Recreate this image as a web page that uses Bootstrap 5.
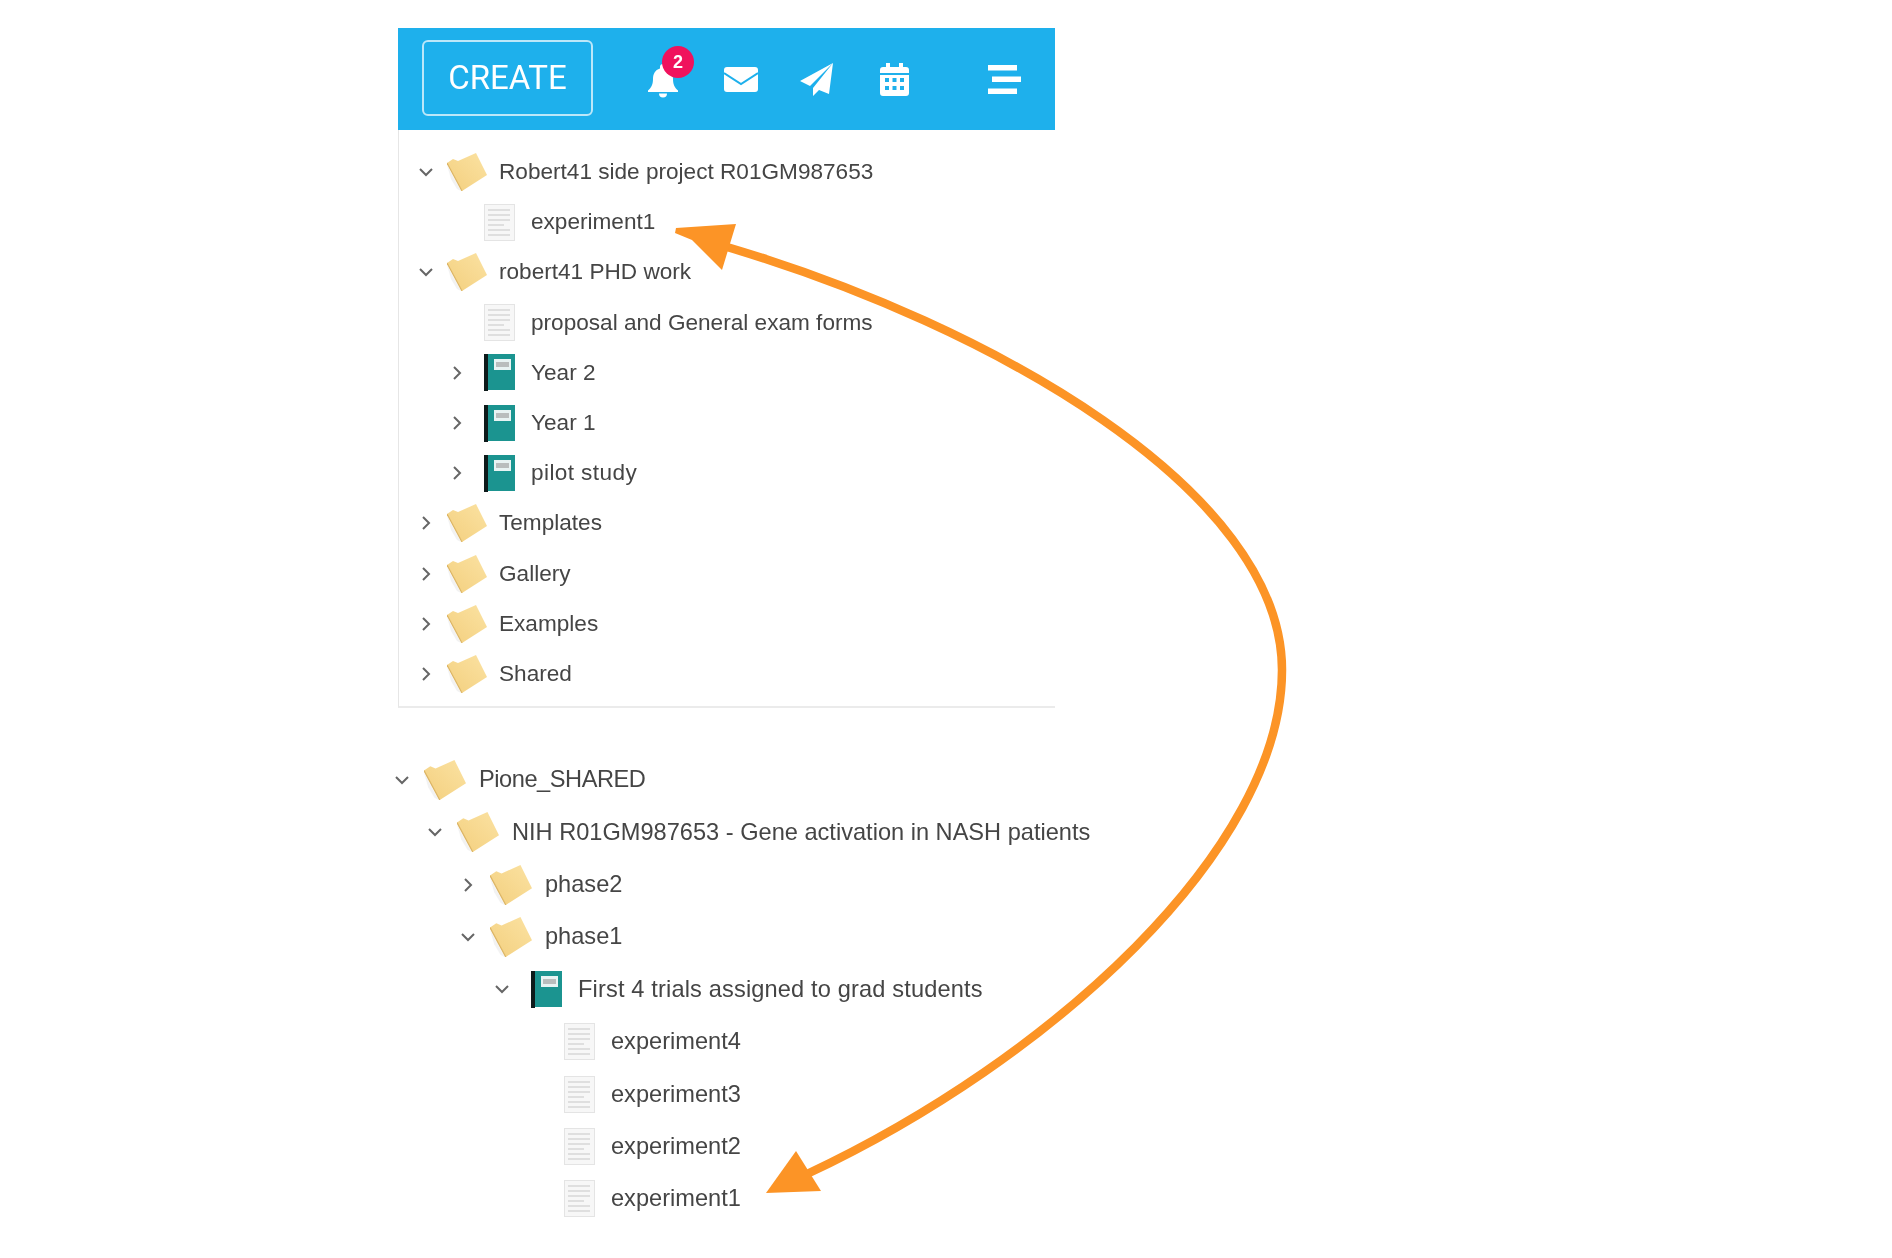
<!DOCTYPE html>
<html lang="en">
<head>
  <meta charset="UTF-8" />
  <meta name="viewport" content="width=device-width, initial-scale=1" />
  <title>Tree move</title>
  <link href="https://cdn.jsdelivr.net/npm/bootstrap@5.3.2/dist/css/bootstrap.min.css" rel="stylesheet">
  <style>
    body { background: #fff; }
    .page-wrap { width: 1892px; height: 1258px; padding: 28px 0 0 398px; overflow: hidden; }
    .side-panel { width: 657px; }
    .top-bar { height: 102px; background: #1eb0ec; padding-left: 24px; gap: 44px; }
    .top-bar > * { filter: blur(.45px); }
    .btn-create {
      width: 171px; height: 76px; padding: 0 0 2px; margin: -2px 11px 0 0;
      font: 400 33px Roboto, sans-serif;
      color: #fff; border: 2px solid rgba(255,255,255,.7); border-radius: 6px;
    }
    .bar-ico { display: block; fill: #fff; }
    .bell-wrap { width: 30px; height: 34px; margin-top: 3px; }
    .bell-badge {
      top: -18px; left: 14px; width: 32px; height: 32px; padding: 0;
      background: #f0125d; color: #fff; font: 700 18px/32px "Liberation Sans", sans-serif;
    }
    .mail-ico { margin: 0 -1.5px 0 1.5px; }
    .cal-ico { margin-left: 2.5px; }
    .menu-push { margin-left: 35px; }
    .tree-box { border-left: 1px solid #e6e6e6; border-bottom: 2px solid #ebebeb; padding: 17px 0 7px 17px; }
    .tree-list { filter: blur(.7px); }
    .tree-row {
      display: flex; align-items: center; height: 50.2px;
      font: 400 22.6px "Liberation Sans", Arial, sans-serif; color: #454545;
    }
    .shared-list { margin: 45.5px 0 0 -6px; width: 760px; }
    .shared-list .tree-row { height: 52.4px; font-size: 23.6px; }
    .chev { width: 20px; height: 20px; flex: none; fill: none; stroke: #666; stroke-width: 2; }
    .no-chev { width: 20px; height: 20px; flex: none; }
    .ico-folder { width: 40px; height: 38px; flex: none; margin: 0 12px 0 11px; }
    .ico-item { width: 31px; height: 37px; flex: none; margin: 0 16px 0 17px; }
    .shared-list .ico-folder { width: 42px; height: 40px; margin: 0 13px 0 12px; }
    .shared-list .ico-item { margin: 0 16px 0 19px; }
    .lv1 { padding-left: 31px; }
    .lv2-s { padding-left: 33px; }
    .lv3-s { padding-left: 66px; }
    .lv4-s { padding-left: 100px; }
    .lv5-s { padding-left: 133px; }
    .track-tight { letter-spacing: -.45px; }
    .track-loose { letter-spacing: .15px; }
    .track-wide { letter-spacing: .4px; }
    .arrow-layer { width: 1892px; height: 1258px; pointer-events: none; }
  </style>
</head>
<body class="position-relative">

  <svg width="0" height="0" class="position-absolute">
    <defs>
      <linearGradient id="fg" x1="0" y1="1" x2="1" y2="0">
        <stop offset="0" stop-color="#f3cf7e"/><stop offset="1" stop-color="#fbe2a2"/>
      </linearGradient>
      <symbol id="folder" viewBox="0 0 40 38">
        <path d="M0 12l14 26-4-2-6-10z" fill="#e6e6e6" opacity=".5"/>
        <path d="M0 10l6-4 5 2 18-8 11 22-25 16z" fill="url(#fg)"/>
        <path d="M0 10l15 28" stroke="#dcb565" stroke-width="1.2"/>
      </symbol>
      <symbol id="doc" viewBox="0 0 31 37">
        <rect x=".5" y=".5" width="30" height="36" fill="#f7f7f7" stroke="#e4e4e4"/>
        <path d="M4 6h22M4 11h22M4 16h22M4 21h16M4 26h22M4 31h22" stroke="#d8d8d8" stroke-width="1.4"/>
      </symbol>
      <symbol id="book" viewBox="0 0 31 37">
        <rect width="31" height="36" fill="#1b9490"/>
        <rect width="4" height="37" fill="#0d1a1a"/>
        <rect x="10" y="5" width="17" height="11" fill="#e8f3f3"/>
        <rect x="12" y="8" width="13" height="5" fill="#b9bdbd"/>
      </symbol>
      <symbol id="down" viewBox="0 0 20 20"><path d="M4 7l6 6 6-6"/></symbol>
      <symbol id="right" viewBox="0 0 20 20"><path d="M7 4l6 6-6 6"/></symbol>
    </defs>
  </svg>

  <div class="page-wrap">
    <div class="side-panel">
      <div class="top-bar d-flex align-items-center">
        <button type="button" class="btn btn-create">CREATE</button>
        <div class="bell-wrap position-relative">
          <svg class="bar-ico" width="30" height="34" viewBox="0 0 30 34"><path d="M15 0a3 3 0 0 0-3 3v1.500C7 6 5 10 5 15c0 6-2 9-5 11.500V28h30v-1.500c-3-2.500-5-5.500-5-11.500 0-5-2-9-7-10.500V3a3 3 0 0 0-3-3zM11 29.500a4 4 0 0 0 8 0z"/></svg>
          <span class="badge rounded-circle position-absolute bell-badge">2</span>
        </div>
        <svg class="bar-ico mail-ico" width="34" height="25" viewBox="0 0 34 25"><rect width="34" height="25" rx="3"/><path d="M0 6l17 11L34 6" fill="none" stroke="#1eb0ec" stroke-width="2"/></svg>
        <svg class="bar-ico" width="33" height="33" viewBox="0 0 33 33"><path d="M33 0L0 18l10 5zM33 0L13 25v8l6-6 10 4z"/></svg>
        <svg class="bar-ico cal-ico" width="29" height="33" viewBox="0 0 29 33"><path fill-rule="evenodd" d="M6 0h4v4h9V0h4v4h3a3 3 0 0 1 3 3v3H0V7a3 3 0 0 1 3-3h3zM0 12h29v18a3 3 0 0 1-3 3H3a3 3 0 0 1-3-3zM5 15v4h4v-4zm7.500 0v4h4v-4zm7.500 0v4h4v-4zM5 23v4h4v-4zm7.500 0v4h4v-4zm7.500 0v4h4v-4z"/></svg>
        <svg class="bar-ico menu-push" width="33" height="29" viewBox="0 0 33 29"><path d="M0 0h29v5.500H0zM4 11.500h29V17H4zM0 23.500h29V29H0z"/></svg>
      </div>

      <div class="tree-box">
        <ul class="list-unstyled m-0 tree-list">
          <li class="tree-row"><svg class="chev"><use href="#down"/></svg><svg class="ico-folder"><use href="#folder"/></svg>Robert41 side project R01GM987653</li>
          <li class="tree-row lv1"><span class="no-chev"></span><svg class="ico-item"><use href="#doc"/></svg>experiment1</li>
          <li class="tree-row"><svg class="chev"><use href="#down"/></svg><svg class="ico-folder"><use href="#folder"/></svg>robert41 PHD work</li>
          <li class="tree-row lv1"><span class="no-chev"></span><svg class="ico-item"><use href="#doc"/></svg>proposal and General exam forms</li>
          <li class="tree-row lv1"><svg class="chev"><use href="#right"/></svg><svg class="ico-item"><use href="#book"/></svg>Year 2</li>
          <li class="tree-row lv1"><svg class="chev"><use href="#right"/></svg><svg class="ico-item"><use href="#book"/></svg>Year 1</li>
          <li class="tree-row lv1 track-wide"><svg class="chev"><use href="#right"/></svg><svg class="ico-item"><use href="#book"/></svg>pilot study</li>
          <li class="tree-row"><svg class="chev"><use href="#right"/></svg><svg class="ico-folder"><use href="#folder"/></svg>Templates</li>
          <li class="tree-row"><svg class="chev"><use href="#right"/></svg><svg class="ico-folder"><use href="#folder"/></svg>Gallery</li>
          <li class="tree-row"><svg class="chev"><use href="#right"/></svg><svg class="ico-folder"><use href="#folder"/></svg>Examples</li>
          <li class="tree-row"><svg class="chev"><use href="#right"/></svg><svg class="ico-folder"><use href="#folder"/></svg>Shared</li>
        </ul>
      </div>

      <ul class="list-unstyled tree-list shared-list">
        <li class="tree-row track-tight"><svg class="chev"><use href="#down"/></svg><svg class="ico-folder"><use href="#folder"/></svg>Pione_SHARED</li>
        <li class="tree-row lv2-s"><svg class="chev"><use href="#down"/></svg><svg class="ico-folder"><use href="#folder"/></svg>NIH R01GM987653 - Gene activation in NASH patients</li>
        <li class="tree-row lv3-s"><svg class="chev"><use href="#right"/></svg><svg class="ico-folder"><use href="#folder"/></svg>phase2</li>
        <li class="tree-row lv3-s"><svg class="chev"><use href="#down"/></svg><svg class="ico-folder"><use href="#folder"/></svg>phase1</li>
        <li class="tree-row lv4-s track-loose"><svg class="chev"><use href="#down"/></svg><svg class="ico-item"><use href="#book"/></svg>First 4 trials assigned to grad students</li>
        <li class="tree-row lv5-s"><span class="no-chev"></span><svg class="ico-item"><use href="#doc"/></svg>experiment4</li>
        <li class="tree-row lv5-s"><span class="no-chev"></span><svg class="ico-item"><use href="#doc"/></svg>experiment3</li>
        <li class="tree-row lv5-s"><span class="no-chev"></span><svg class="ico-item"><use href="#doc"/></svg>experiment2</li>
        <li class="tree-row lv5-s"><span class="no-chev"></span><svg class="ico-item"><use href="#doc"/></svg>experiment1</li>
      </ul>
    </div>
  </div>

  <!-- curved arrow drawn over the two trees -->
  <svg class="arrow-layer position-absolute top-0 start-0" viewBox="0 0 1892 1258">
    <path d="M727 247C990 325 1282 490 1282 670C1282 850 1050 1060 807 1174" fill="none" stroke="#fc9426" stroke-width="8.5"/>
    <path d="M736 224L676 228L675 233L692 240L722 270z" fill="#fc9426"/>
    <path d="M796 1151L766 1193L821 1191z" fill="#fc9426"/>
  </svg>

  <script src="https://cdn.jsdelivr.net/npm/bootstrap@5.3.2/dist/js/bootstrap.bundle.min.js"></script>
</body>
</html>
